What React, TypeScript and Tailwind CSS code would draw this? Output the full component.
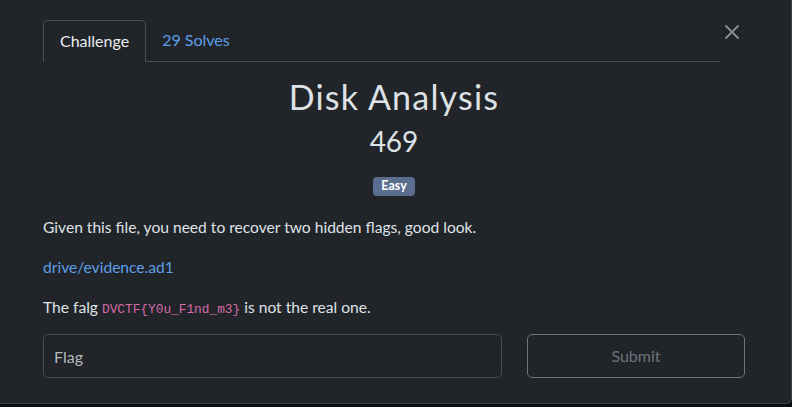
import { X } from "lucide-react";

const lato = "font-['Lato','Liberation_Sans',sans-serif]";

export default function App() {
  return (
    <div className="h-[407px] w-[792px] bg-[#0c0d0e]">
      <div
        className={`relative h-[404px] w-[792px] rounded-br-[6px] border-r border-b border-[#3d4247] bg-[#212529] pt-[20px] pr-[46px] pl-[43px] ${lato}`}
      >
        <button
          type="button"
          className="absolute top-[20px] right-[47px] text-[#8a8f94]"
        >
          <X size={24} strokeWidth={1.8} />
        </button>

        <div className="mr-[25px] flex border-b border-[#4a4f55]">
          <div className="-mb-px rounded-t-[5px] border border-b-[#212529] border-[#4a4f55] px-[16px] py-[8px] text-[16px] leading-[24px] text-[#e9ecef]">
            Challenge
          </div>
          <div className="px-[16px] py-[8px] text-[16px] leading-[24px] text-[#5d9ee8]">
            29 Solves
          </div>
        </div>

        <div className="flex flex-col items-center">
          <h1 className="mt-[15px] text-[34px] leading-[40px] tracking-[1.2px] text-[#dee2e6]">
            Disk Analysis
          </h1>
          <div className="mt-[6px] text-[28px] leading-[36px] text-[#dee2e6]">469</div>
          <span className="mt-[18px] flex h-[19px] items-center rounded-[4px] bg-[#5b6e8f] px-[8px] text-[12.5px] font-bold text-white">
            Easy
          </span>
        </div>

        <div className="mt-[19px] text-[15.6px] leading-[24px] text-[#dee2e6]">
          <p>Given this file, you need to recover two hidden flags, good look.</p>
          <p className="mt-[16px] text-[#5d9ee8]">drive/evidence.ad1</p>
          <p className="mt-[16px]">
            The falg{" "}
            <code className="font-['Liberation_Mono',monospace] text-[12.8px] text-[#d66aa8]">
              {"DVCTF{Y0u_F1nd_m3}"}
            </code>{" "}
            is not the real one.
          </p>
        </div>

        <div className="mt-[12px] flex gap-[25px]">
          <input
            placeholder="Flag"
            className="h-[44px] flex-1 rounded-[5px] border border-[#4a4f55] bg-[#212529] px-[10px] text-[16px] text-[#dee2e6] placeholder:text-[#b3b8bd] outline-none"
          />
          <button
            type="button"
            className="h-[44px] w-[218px] rounded-[5px] border border-[#6c737a] text-[16px] text-[#6c737a]"
          >
            Submit
          </button>
        </div>
      </div>
    </div>
  );
}
